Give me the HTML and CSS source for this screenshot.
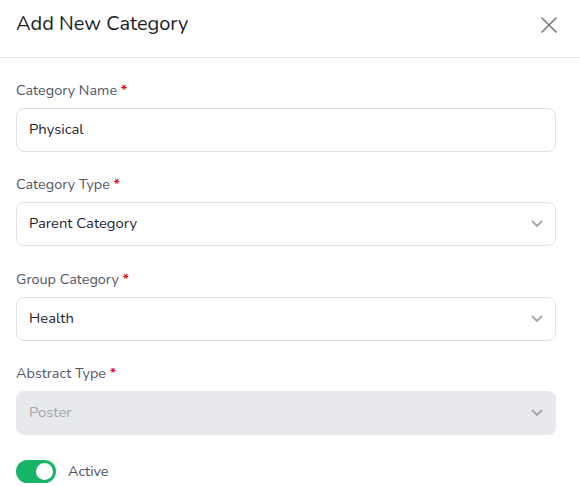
FILE: index.html
```html
<!DOCTYPE html>
<html lang="en">
<head>
<meta charset="utf-8">
<title>Add New Category</title>
<link rel="stylesheet" href="styles.css">
</head>
<body>
<div class="modal">
  <div class="modal-header">
    <h2 class="modal-title">Add New Category</h2>
    <button class="close-btn" aria-label="Close">
      <svg width="16" height="16" viewBox="0 0 16 16"><path d="M1 1L15 15M15 1L1 15" stroke="#7a7a7a" stroke-width="1.6" stroke-linecap="round" fill="none"/></svg>
    </button>
  </div>
  <div class="modal-body">
    <div class="field">
      <label class="label">Category Name <span class="req">*</span></label>
      <div class="control">Physical</div>
    </div>
    <div class="field">
      <label class="label">Category Type <span class="req">*</span></label>
      <div class="control select"><span>Parent Category</span>
        <svg class="chev" width="12" height="8" viewBox="0 0 12 8"><path d="M1.5 1.5L6 6L10.5 1.5" stroke="#a9a9b2" stroke-width="2" stroke-linecap="round" stroke-linejoin="round" fill="none"/></svg>
      </div>
    </div>
    <div class="field">
      <label class="label">Group Category <span class="req">*</span></label>
      <div class="control select"><span>Health</span>
        <svg class="chev" width="12" height="8" viewBox="0 0 12 8"><path d="M1.5 1.5L6 6L10.5 1.5" stroke="#a9a9b2" stroke-width="2" stroke-linecap="round" stroke-linejoin="round" fill="none"/></svg>
      </div>
    </div>
    <div class="field">
      <label class="label">Abstract Type <span class="req">*</span></label>
      <div class="control select disabled"><span>Poster</span>
        <svg class="chev" width="12" height="8" viewBox="0 0 12 8"><path d="M1.5 1.5L6 6L10.5 1.5" stroke="#a9a9b2" stroke-width="2" stroke-linecap="round" stroke-linejoin="round" fill="none"/></svg>
      </div>
    </div>
    <div class="toggle-row">
      <span class="toggle"><span class="knob"></span></span>
      <span class="toggle-label">Active</span>
    </div>
  </div>
</div>
</body>
</html>
```
FILE: styles.css
```css
* { box-sizing: border-box; }
html, body { margin: 0; padding: 0; background: #fff; }
body {
  font-family: "Nunito", "Open Sans", "Noto Sans", sans-serif;
  color: #1f2430;
  width: 580px;
}
.modal { width: 580px; }
.modal-header {
  height: 58px;
  border-bottom: 1px solid #e3e3e8;
  display: flex;
  align-items: flex-start;
  justify-content: space-between;
  padding: 11px 23px 0 16px;
}
.modal-title {
  margin: 0;
  font-size: 20px;
  line-height: 26px;
  font-weight: 400;
  color: #1a1d26;
}
.close-btn {
  border: 0;
  background: none;
  padding: 0;
  margin-top: 6px;
  width: 16px;
  height: 16px;
  display: flex;
  cursor: pointer;
}
.modal-body {
  padding: 22px 24px 0 16px;
  display: flex;
  flex-direction: column;
  gap: 22.4px;
}
.field { display: flex; flex-direction: column; gap: 8px; }
.label {
  font-size: 14.4px;
  line-height: 20px;
  color: #515666;
}
.req { color: #e5141e; font-weight: 700; }
.control {
  height: 44px;
  border: 1px solid #e1e2e8;
  border-radius: 8px;
  display: flex;
  align-items: center;
  padding: 0 12px 2px;
  font-size: 14.8px;
  color: #1f2430;
}
.select { justify-content: space-between; }
.select .chev { margin-top: 2px; }
.disabled { background: #e8e9ec; border-color: #e8e9ec; color: #a3a6ae; }
.toggle-row { display: flex; align-items: center; gap: 12px; margin-top: 2px; }
.toggle {
  width: 40px;
  height: 23px;
  border-radius: 12px;
  background: #17b466;
  display: flex;
  align-items: center;
  justify-content: flex-end;
  padding: 0 3px;
}
.knob { width: 17px; height: 17px; border-radius: 50%; background: #fff; }
.toggle-label { font-size: 14.4px; color: #4a4f5c; }
```
